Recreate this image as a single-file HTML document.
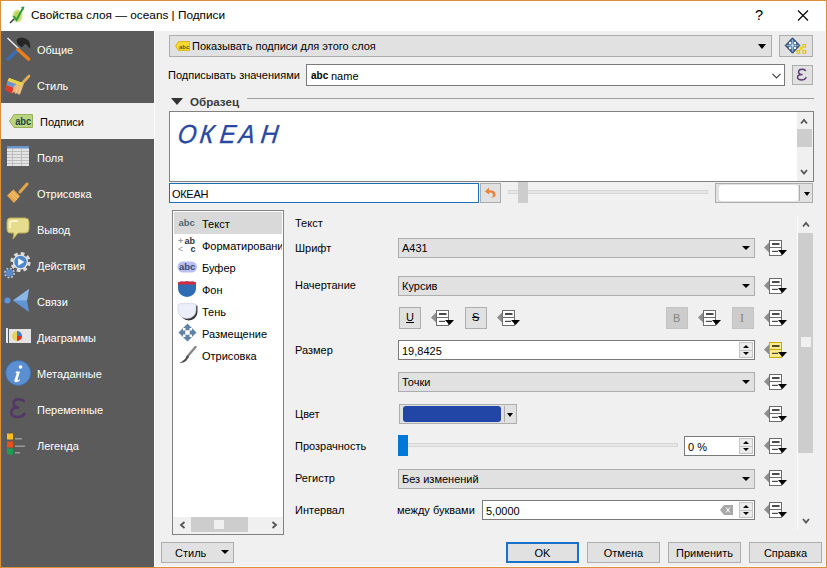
<!DOCTYPE html>
<html><head><meta charset="utf-8">
<style>
*{box-sizing:border-box}
html,body{margin:0;padding:0}
body{width:827px;height:568px;overflow:hidden;position:relative;background:#f0f0f0;font-family:"Liberation Sans",sans-serif;font-size:11px;color:#000}
.a{position:absolute}
.t{position:absolute;white-space:nowrap;line-height:13px}
.w{color:#fff}
.combo{position:absolute;background:#e1e1e1;border:1px solid #adadad}
.inp{position:absolute;background:#fff;border:1px solid #7a7a7a}
.btn{position:absolute;background:#e1e1e1;border:1px solid #adadad;text-align:center}
</style></head><body>

<div class="a" style="left:0;top:0;width:827px;height:568px;border:1px solid #d8913a;z-index:50;pointer-events:none"></div>
<div class="a" style="left:825px;top:31px;width:1px;height:536px;background:#fbfbfb;z-index:49"></div>
<div class="a" style="left:155px;top:566px;width:671px;height:1px;background:#fbfbfb;z-index:49"></div>
<div class="a" style="left:154px;top:31px;width:1px;height:536px;background:#fbfbfb;z-index:49"></div>
<div class="a" style="left:1px;top:31px;width:2px;height:72px;background:#5d5f68;z-index:49"></div>
<div class="a" style="left:1px;top:139px;width:2px;height:428px;background:#5d5f68;z-index:49"></div>
<div class="a" style="left:1px;top:1px;width:825px;height:30px;background:#fff"></div>
<svg class="a" style="left:9px;top:6px" width="16" height="18" viewBox="0 0 16 18">
<ellipse cx="8.5" cy="10" rx="5" ry="6.5" fill="#d3e48a"/>
<ellipse cx="8.5" cy="10" rx="3" ry="4.5" fill="#b9d35a"/>
<path d="M4.5 10 L7.5 14 L14 2" stroke="#2c9c3a" stroke-width="2" fill="none"/>
<polygon points="12,1 15.5,0.5 14.5,4" fill="#2c9c3a"/>
<path d="M1 17 L5 13" stroke="#333" stroke-width="1.5"/>
</svg>
<div class="t" style="left:31px;top:9px;font-size:11.8px">Свойства слоя — oceans | Подписи</div>
<div class="t" style="left:755px;top:7px;font-size:14.5px;line-height:16px">?</div>
<svg class="a" style="left:797px;top:10px" width="12" height="11" viewBox="0 0 12 11"><path d="M1 0.5 L11 10.5 M11 0.5 L1 10.5" stroke="#000" stroke-width="1.1"/></svg>
<div class="a" style="left:1px;top:31px;width:153px;height:536px;background:#5b5b5b"></div>
<div class="a" style="left:1px;top:103px;width:153px;height:36px;background:#f0f0f0"></div>
<div class="t w" style="left:37px;top:44px">Общие</div>
<div class="t w" style="left:37px;top:80px">Стиль</div>
<div class="t" style="left:40px;top:116px">Подписи</div>
<div class="t w" style="left:37px;top:152px">Поля</div>
<div class="t w" style="left:37px;top:188px">Отрисовка</div>
<div class="t w" style="left:37px;top:224px">Вывод</div>
<div class="t w" style="left:37px;top:260px">Действия</div>
<div class="t w" style="left:37px;top:296px">Связи</div>
<div class="t w" style="left:37px;top:332px">Диаграммы</div>
<div class="t w" style="left:37px;top:368px">Метаданные</div>
<div class="t w" style="left:37px;top:404px">Переменные</div>
<div class="t w" style="left:37px;top:440px">Легенда</div>

<svg class="a" style="left:2px;top:33px" width="34" height="34" viewBox="0 0 34 34">
<path d="M14.5 7 Q16 4.5 20 4.5 Q24 4.8 26.5 7.5 Q28.5 10 28.2 15.5 L26.5 14 Q25.5 11.5 23 11 L19.5 14.5 L15.5 11 Z" fill="#262626"/>
<line x1="6.5" y1="26" x2="17" y2="15.5" stroke="#3a6db3" stroke-width="3.6" stroke-linecap="round"/>
<line x1="5.5" y1="5" x2="16.5" y2="15.5" stroke="#f2f2f2" stroke-width="1.4"/>
<line x1="16" y1="16.5" x2="26.5" y2="26" stroke="#ea7d1c" stroke-width="3.6" stroke-linecap="round"/>
</svg>
<svg class="a" style="left:2px;top:69px" width="34" height="34" viewBox="0 0 34 34">
<line x1="27" y1="7" x2="19.5" y2="15" stroke="#e2ad55" stroke-width="2.6" stroke-linecap="round"/>
<polygon points="7,9 22,14.5 18,25.5 3.5,20" fill="#e8b678"/>
<polygon points="7,9 21,14 20,17 5.5,12" fill="#e6d44c"/>
<polygon points="5.5,12 14,15 12.5,19 4.5,16" fill="#6d93cf"/>
<polygon points="4.5,16 12,19 10.5,25 3,21" fill="#df3a2c"/>
<path d="M13 16 L10.5 24 M16 17 L13.5 25 M19 18 L16.5 25.5" stroke="#f2d2a0" stroke-width="0.8"/>
</svg>
<svg class="a" style="left:9px;top:114px" width="24" height="14" viewBox="0 0 24 14">
<polygon points="0.5,7 5,0.5 23.5,0.5 23.5,13.5 5,13.5" fill="#b9d67f" stroke="#98b05a"/>
<text x="6.2" y="11" font-family="Liberation Sans" font-weight="bold" font-size="10" fill="#24424a" textLength="16" lengthAdjust="spacingAndGlyphs">abc</text>
</svg>
<svg class="a" style="left:7px;top:146px" width="23" height="21" viewBox="0 0 23 21">
<rect x="0" y="0" width="22" height="20" fill="#e4e4e4"/>
<rect x="0" y="0" width="22" height="2.5" fill="#6a94cc"/>
<path d="M0 5.5 H22 M0 8.5 H22 M0 11.5 H22 M0 14.5 H22 M0 17.5 H22 M5.5 2.5 V20 M14.5 2.5 V20" stroke="#bdbdbd" stroke-width="1"/>
</svg>
<svg class="a" style="left:5px;top:182px" width="24" height="23" viewBox="0 0 24 23">
<line x1="22" y1="2" x2="15" y2="10" stroke="#e3a54a" stroke-width="3" stroke-linecap="round"/>
<polygon points="2,13.5 8.5,7.5 15,14 9,21" fill="#e9a94c"/>
<path d="M5 11 L12 18 M7 9.5 L13.5 16" stroke="#f4cc8a" stroke-width="1"/>
</svg>
<svg class="a" style="left:6px;top:217px" width="24" height="23" viewBox="0 0 24 23">
<path d="M4 1 H19 Q23 1 23 5 V12 Q23 16 19 16 H12 L7 22 L8 16 H4 Q1 16 1 12 V5 Q1 1 4 1 Z" fill="#e6dc8e" stroke="#bcae55" stroke-width="1"/>
<path d="M4 11 V6 Q4 4 7 4 H12" stroke="#fffbe0" stroke-width="1.3" fill="none"/>
</svg>
<svg class="a" style="left:3px;top:251px" width="30" height="29" viewBox="0 0 30 29">
<circle cx="17.5" cy="11" r="8.6" fill="none" stroke="#dcdcdc" stroke-width="3" stroke-dasharray="3.7 3.05"/>
<circle cx="17.5" cy="11" r="7.6" fill="#e6e6e6"/>
<circle cx="17.5" cy="11" r="6.2" fill="#4f88c9"/>
<polygon points="15.2,7.3 15.2,14.7 21.2,11" fill="#fff"/>
<circle cx="6.5" cy="22" r="4.6" fill="none" stroke="#c9d3e0" stroke-width="1.6" stroke-dasharray="1.8 1.8"/>
<circle cx="6.5" cy="22" r="3.8" fill="#5a89c6"/>
</svg>
<svg class="a" style="left:3px;top:288px" width="28" height="26" viewBox="0 0 28 26">
<polygon points="10,12.5 26,1 24,12.5 26,24" fill="#5f95d6"/>
<polygon points="10,12.5 26,1 24,12.5" fill="#8cb6e8"/>
<circle cx="4.5" cy="12.5" r="3" fill="#5f95d6"/>
</svg>
<svg class="a" style="left:6px;top:327px" width="25" height="17" viewBox="0 0 25 17">
<rect x="0" y="1" width="2" height="15" fill="#e8e8e8"/>
<rect x="3" y="2" width="22" height="14" fill="#e4e4e4"/>
<circle cx="11" cy="9" r="5" fill="#e9d35a"/>
<path d="M11 9 L11 4 A5 5 0 0 1 16 9 Z" fill="#4a7ac8"/>
<path d="M11 9 L16 9 A5 5 0 0 1 11 14 Z" fill="#d8302a"/>
</svg>
<svg class="a" style="left:5px;top:360px" width="27" height="27" viewBox="0 0 27 27">
<circle cx="13.2" cy="13" r="12.5" fill="#5a8fd2" stroke="#3f6fae" stroke-width="0.8"/>
<circle cx="15.5" cy="7" r="1.8" fill="#fff"/>
<path d="M11 11.5 H15 L12.5 19.5 Q12.3 20.5 13.5 20 L15 19 L14.5 21 Q12 22.5 10 22 Q9 21.5 9.5 20 L11.8 13 H10.5 Z" fill="#fff"/>
</svg>
<svg class="a" style="left:8px;top:397px" width="20" height="24" viewBox="0 0 20 24"><path d="M16 4.2 Q14 2.2 11 2.2 Q5.6 2.2 5.6 6.3 Q5.6 10.5 11 10.5 Q3.2 10.5 3.2 15.2 Q3.2 20 10 20 Q14.5 20 16.5 16.8" stroke="#533669" stroke-width="2.6" fill="none" stroke-linecap="round"/></svg>
<svg class="a" style="left:6px;top:433px" width="20" height="22" viewBox="0 0 20 22">
<rect x="1" y="0.5" width="6" height="6" fill="#f6c21a"/>
<rect x="1" y="8.5" width="6" height="6" fill="#e8501c"/>
<rect x="1" y="15.5" width="6" height="6" fill="#1aa050"/>
<rect x="9" y="5" width="7" height="1.5" fill="#9a9a9a"/>
<rect x="9" y="12.5" width="10" height="1.5" fill="#9a9a9a"/>
<rect x="9" y="19" width="5" height="1.5" fill="#9a9a9a"/>
</svg>

<div class="combo" style="left:169px;top:35px;width:603px;height:22px"></div>
<div class="t" style="left:192px;top:40px">Показывать подписи для этого слоя</div>

<svg class="a" style="left:175px;top:41px" width="15" height="10" viewBox="0 0 15 10">
<polygon points="0.5,5 3.5,0.5 14.5,0.5 14.5,9.5 3.5,9.5" fill="#f5d830" stroke="#d8b000" stroke-width="0.8"/>
<text x="4" y="7.5" font-family="Liberation Sans" font-weight="bold" font-size="6" fill="#6a5a20">abc</text>
</svg>

<div class="a" style="left:758px;top:44px;width:0;height:0;border-left:4.5px solid transparent;border-right:4.5px solid transparent;border-top:5px solid #000"></div>
<div class="btn" style="left:779px;top:35px;width:34px;height:22px"></div>

<svg class="a" style="left:784px;top:37px" width="24" height="19" viewBox="0 0 24 19">
<polygon points="8.5,0.8 15.8,8.5 8.5,16.2 1.2,8.5" fill="#4c6c98" stroke="#22365a" stroke-width="1"/>
<path d="M8.5 2.5 V14.5 M2.8 8.5 H14.2" stroke="#8fb0d8" stroke-width="1.2"/>
<rect x="5" y="5" width="2.2" height="2.2" fill="#eef6ff"/>
<rect x="9.8" y="5" width="2.2" height="2.2" fill="#eef6ff"/>
<rect x="5" y="9.8" width="2.2" height="2.2" fill="#eef6ff"/>
<rect x="9.8" y="9.8" width="2.2" height="2.2" fill="#eef6ff"/>
<rect x="7.5" y="7.5" width="2" height="2" fill="#dfe9d8"/>
<rect x="15.6" y="9.8" width="3" height="3.2" fill="#f2d400"/>
<rect x="19" y="7.5" width="2.6" height="2.6" fill="#fff7b0" stroke="#e0c000" stroke-width="1.1"/>
<rect x="13" y="13.6" width="2.6" height="2.6" fill="#fff7b0" stroke="#e0c000" stroke-width="1.1"/>
<rect x="19" y="13.6" width="2.6" height="2.6" fill="#fff7b0" stroke="#e0c000" stroke-width="1.1"/>
</svg>

<div class="t" style="left:168px;top:69px">Подписывать значениями</div>
<div class="inp" style="left:306px;top:64px;width:479px;height:22px"></div>
<div class="t" style="left:311px;top:69px;font-weight:bold;font-size:10px">abc</div>
<div class="t" style="left:331px;top:70px">name</div>
<svg class="a" style="left:772px;top:73px" width="9" height="6" viewBox="0 0 9 6"><path d="M0.5 0.8 L4.5 4.8 L8.5 0.8" stroke="#444" stroke-width="1.2" fill="none"/></svg>
<div class="btn" style="left:792px;top:65px;width:21px;height:20px"></div>
<svg class="a" style="left:795px;top:67px" width="14" height="15" viewBox="0 0 14 15"><path d="M10.3 3.4 Q9 2.2 7.3 2.2 Q3.6 2.2 3.6 4.9 Q3.6 7.5 7.5 7.5 Q2.6 7.5 2.6 10.2 Q2.6 12.9 7 12.9 Q9.8 12.9 11 10.6" stroke="#5b3b73" stroke-width="1.5" fill="none" stroke-linecap="round"/></svg>
<div class="a" style="left:171px;top:98px;width:0;height:0;border-left:6px solid transparent;border-right:6px solid transparent;border-top:7px solid #333"></div>
<div class="t" style="left:190px;top:95px;font-size:11.6px;font-weight:bold;color:#3a3a3a">Образец</div>
<div class="a" style="left:247px;top:98px;width:567px;height:1px;background:#a0a0a0"></div>
<div class="inp" style="left:169px;top:111px;width:645px;height:71px;border-color:#828282"></div>
<div class="t" style="left:177px;top:120px;font-size:26px;line-height:28px;font-style:italic;color:#2a48a0;transform:skewX(-7deg) scaleX(0.92);transform-origin:0 23px;-webkit-text-stroke:0.35px #2a48a0">О</div>
<div class="t" style="left:199px;top:120px;font-size:26px;line-height:28px;font-style:italic;color:#2a48a0;transform:skewX(-7deg) scaleX(0.92);transform-origin:0 23px;-webkit-text-stroke:0.35px #2a48a0">К</div>
<div class="t" style="left:219px;top:120px;font-size:26px;line-height:28px;font-style:italic;color:#2a48a0;transform:skewX(-7deg) scaleX(0.92);transform-origin:0 23px;-webkit-text-stroke:0.35px #2a48a0">Е</div>
<div class="t" style="left:238px;top:120px;font-size:26px;line-height:28px;font-style:italic;color:#2a48a0;transform:skewX(-7deg) scaleX(0.92);transform-origin:0 23px;-webkit-text-stroke:0.35px #2a48a0">А</div>
<div class="t" style="left:260px;top:120px;font-size:26px;line-height:28px;font-style:italic;color:#2a48a0;transform:skewX(-7deg) scaleX(0.92);transform-origin:0 23px;-webkit-text-stroke:0.35px #2a48a0">Н</div>
<div class="a" style="left:797px;top:112px;width:16px;height:69px;background:#f0f0f0"></div>
<div class="a" style="left:797px;top:129px;width:15px;height:18px;background:#cdcdcd"></div>
<svg class="a" style="left:800px;top:118px" width="8" height="7" viewBox="0 0 8 7"><path d="M1 5.5 L4 2 L7 5.5" stroke="#555" stroke-width="1.8" fill="none"/></svg>
<svg class="a" style="left:800px;top:169px" width="8" height="7" viewBox="0 0 8 7"><path d="M1 1 L4 4.5 L7 1" stroke="#555" stroke-width="1.8" fill="none"/></svg>
<div class="inp" style="left:169px;top:183px;width:310px;height:20px;border-color:#1d6fb8"></div>
<div class="t" style="left:172px;top:188px;letter-spacing:-0.3px">ОКЕАН</div>
<div class="btn" style="left:480px;top:183px;width:21px;height:20px"></div>

<svg class="a" style="left:484px;top:186px" width="13" height="13" viewBox="0 0 13 13">
<path d="M5 1.5 L1 5.5 L5 8.5 L5 6.5 Q9 6 9 9 Q9 11 7 11.5 Q11.5 12 11.5 8.5 Q11.5 4 5 4.2 Z" fill="#e9823a"/>
</svg>

<div class="a" style="left:508px;top:190px;width:200px;height:4px;background:#e7e7e7;border:1px solid #d6d6d6"></div>
<div class="a" style="left:518px;top:182px;width:10px;height:21px;background:#cdcdcd"></div>
<div class="btn" style="left:715px;top:183px;width:98px;height:20px"></div>
<div class="a" style="left:719px;top:185px;width:79px;height:16px;background:#fff;border-radius:3px"></div>
<div class="a" style="left:799px;top:185px;width:1px;height:16px;background:#adadad"></div>
<div class="a" style="left:804px;top:192px;width:0;height:0;border-left:3.5px solid transparent;border-right:3.5px solid transparent;border-top:4px solid #000"></div>
<div class="inp" style="left:172px;top:210px;width:112px;height:325px;border-color:#828282"></div>
<div class="a" style="left:174px;top:212px;width:108px;height:22px;background:#d9d9d9"></div>
<div class="a" style="left:173px;top:211px;width:109px;height:300px;overflow:hidden">
<div class="t" style="left:29px;top:7px">Текст</div>
<div class="t" style="left:29px;top:29px">Форматирование</div>
<div class="t" style="left:29px;top:51px">Буфер</div>
<div class="t" style="left:29px;top:73px">Фон</div>
<div class="t" style="left:29px;top:95px">Тень</div>
<div class="t" style="left:29px;top:117px">Размещение</div>
<div class="t" style="left:29px;top:139px">Отрисовка</div>
</div>

<svg class="a" style="left:178px;top:218px" width="18" height="9" viewBox="0 0 18 9">
<text x="0.5" y="7.5" font-family="Liberation Sans" font-weight="bold" font-size="9.5" fill="#4a6a80">abc</text>
</svg>
<svg class="a" style="left:178px;top:237px" width="19" height="16" viewBox="0 0 19 16">
<text x="0" y="7" font-family="Liberation Sans" font-weight="bold" font-size="9" fill="#999">+</text>
<text x="6.5" y="7" font-family="Liberation Sans" font-weight="bold" font-size="9" fill="#333">ab</text>
<text x="0" y="15" font-family="Liberation Sans" font-size="9" fill="#999">&lt;</text>
<text x="12.5" y="15" font-family="Liberation Sans" font-weight="bold" font-size="9" fill="#333">c</text>
</svg>
<svg class="a" style="left:177px;top:261px" width="21" height="12" viewBox="0 0 21 12">
<rect x="0.5" y="0.5" width="19.5" height="11" rx="5.5" fill="#b9bff2"/>
<text x="2" y="9.3" font-family="Liberation Sans" font-weight="bold" font-size="9.5" fill="#384a72">abc</text>
</svg>
<svg class="a" style="left:177px;top:280px" width="20" height="18" viewBox="0 0 20 18">
<path d="M1 2.5 Q4 0.8 7 1.8 Q10 0.5 13 1.8 Q16 0.8 19 2.5 V8.5 A9 8.5 0 0 1 1 8.5 Z" fill="#2e6db4"/>
<path d="M1 2.5 Q4 0.8 7 1.8 Q10 0.5 13 1.8 Q16 0.8 19 2.5 V4.5 H1 Z" fill="#d62a3c"/>
</svg>
<svg class="a" style="left:177px;top:302px" width="21" height="19" viewBox="0 0 21 19">
<path d="M3 4 Q6 2.3 9 3.3 Q12 2 15 3.3 Q18 2.3 20.5 4 V10 A8.75 8.5 0 0 1 3 10 Z" fill="#353535"/>
<path d="M1 2.5 Q4 0.8 7 1.8 Q10 0.5 13 1.8 Q16 0.8 19 2.5 V8.5 A9 8 0 0 1 1 8.5 Z" fill="#eceef9" stroke="#c4c8de" stroke-width="0.6"/>
</svg>
<svg class="a" style="left:178px;top:323px" width="19" height="19" viewBox="0 0 19 19">
<polygon points="9.5,0.5 14,5 11.5,5 11.5,7.5 7.5,7.5 7.5,5 5,5" fill="#5f84a6"/>
<polygon points="9.5,18.5 14,14 11.5,14 11.5,11.5 7.5,11.5 7.5,14 5,14" fill="#5f84a6"/>
<polygon points="0.5,9.5 5,5 5,7.5 7.5,7.5 7.5,11.5 5,11.5 5,14" fill="#5f84a6"/>
<polygon points="18.5,9.5 14,5 14,7.5 11.5,7.5 11.5,11.5 14,11.5 14,14" fill="#5f84a6"/>
<rect x="7.5" y="7.5" width="4" height="4" fill="#fff"/>
</svg>
<svg class="a" style="left:178px;top:346px" width="19" height="19" viewBox="0 0 19 19">
<path d="M17.5 1 L9 11" stroke="#8a8a8a" stroke-width="2.5" stroke-linecap="round"/>
<path d="M10 9 L7 13 Q4 16 1 17 Q5 17.5 8 15 L11 11 Z" fill="#4a4a4a"/>
</svg>

<div class="a" style="left:173px;top:517px;width:110px;height:17px;background:#f0f0f0"></div>
<div class="a" style="left:191px;top:517px;width:57px;height:15px;background:#cdcdcd"></div>
<div class="a" style="left:214px;top:520px;width:10px;height:9px;background:#f0f0f0"></div>
<svg class="a" style="left:179px;top:521px" width="7" height="8" viewBox="0 0 7 8"><path d="M5.5 1 L2 4 L5.5 7" stroke="#555" stroke-width="1.8" fill="none"/></svg>
<svg class="a" style="left:271px;top:521px" width="7" height="8" viewBox="0 0 7 8"><path d="M1.5 1 L5 4 L1.5 7" stroke="#555" stroke-width="1.8" fill="none"/></svg>
<div class="t" style="left:295px;top:217px">Текст</div>
<div class="t" style="left:295px;top:242px">Шрифт</div>
<div class="combo" style="left:398px;top:238px;width:357px;height:20px"></div>
<div class="t" style="left:402px;top:242px">A431</div>
<div class="a" style="left:742px;top:246px;width:0;height:0;border-left:4.0px solid transparent;border-right:4.0px solid transparent;border-top:4px solid #000"></div>
<svg class="a" style="left:764px;top:239px" width="24" height="18" viewBox="0 0 24 18">
<polygon points="0,8.5 5.5,3 5.5,14" fill="#8e8e8e"/>
<rect x="5.5" y="1.5" width="12" height="15" fill="#fff" stroke="#6e6e6e"/>
<line x1="5.5" y1="8.5" x2="17.5" y2="8.5" stroke="#6e6e6e"/>
<rect x="8" y="4" width="7.5" height="2" fill="#4a4a4a"/>
<rect x="8" y="11.8" width="6" height="1.2" fill="#4a4a4a"/>
<polygon points="14,11 23,11 18.5,16" fill="#000"/>
</svg>
<div class="t" style="left:295px;top:279px">Начертание</div>
<div class="combo" style="left:398px;top:276px;width:357px;height:20px"></div>
<div class="t" style="left:402px;top:280px">Курсив</div>
<div class="a" style="left:742px;top:284px;width:0;height:0;border-left:4.0px solid transparent;border-right:4.0px solid transparent;border-top:4px solid #000"></div>
<svg class="a" style="left:764px;top:277px" width="24" height="18" viewBox="0 0 24 18">
<polygon points="0,8.5 5.5,3 5.5,14" fill="#8e8e8e"/>
<rect x="5.5" y="1.5" width="12" height="15" fill="#fff" stroke="#6e6e6e"/>
<line x1="5.5" y1="8.5" x2="17.5" y2="8.5" stroke="#6e6e6e"/>
<rect x="8" y="4" width="7.5" height="2" fill="#4a4a4a"/>
<rect x="8" y="11.8" width="6" height="1.2" fill="#4a4a4a"/>
<polygon points="14,11 23,11 18.5,16" fill="#000"/>
</svg>
<div class="btn" style="left:399px;top:307px;width:22px;height:22px"></div>
<div class="t" style="left:406px;top:311px;text-decoration:underline">U</div>
<svg class="a" style="left:431px;top:309px" width="24" height="18" viewBox="0 0 24 18">
<polygon points="0,8.5 5.5,3 5.5,14" fill="#8e8e8e"/>
<rect x="5.5" y="1.5" width="12" height="15" fill="#fff" stroke="#6e6e6e"/>
<line x1="5.5" y1="8.5" x2="17.5" y2="8.5" stroke="#6e6e6e"/>
<rect x="8" y="4" width="7.5" height="2" fill="#4a4a4a"/>
<rect x="8" y="11.8" width="6" height="1.2" fill="#4a4a4a"/>
<polygon points="14,11 23,11 18.5,16" fill="#000"/>
</svg>
<div class="btn" style="left:465px;top:307px;width:22px;height:22px"></div>
<div class="t" style="left:472px;top:311px;text-decoration:line-through">S</div>
<svg class="a" style="left:497px;top:309px" width="24" height="18" viewBox="0 0 24 18">
<polygon points="0,8.5 5.5,3 5.5,14" fill="#8e8e8e"/>
<rect x="5.5" y="1.5" width="12" height="15" fill="#fff" stroke="#6e6e6e"/>
<line x1="5.5" y1="8.5" x2="17.5" y2="8.5" stroke="#6e6e6e"/>
<rect x="8" y="4" width="7.5" height="2" fill="#4a4a4a"/>
<rect x="8" y="11.8" width="6" height="1.2" fill="#4a4a4a"/>
<polygon points="14,11 23,11 18.5,16" fill="#000"/>
</svg>
<div class="btn" style="left:666px;top:307px;width:22px;height:22px;background:#cccccc;border-color:#c4c4c4"></div>
<div class="t" style="left:673px;top:312px;color:#838383">B</div>
<svg class="a" style="left:698px;top:309px" width="24" height="18" viewBox="0 0 24 18">
<polygon points="0,8.5 5.5,3 5.5,14" fill="#8e8e8e"/>
<rect x="5.5" y="1.5" width="12" height="15" fill="#fff" stroke="#6e6e6e"/>
<line x1="5.5" y1="8.5" x2="17.5" y2="8.5" stroke="#6e6e6e"/>
<rect x="8" y="4" width="7.5" height="2" fill="#4a4a4a"/>
<rect x="8" y="11.8" width="6" height="1.2" fill="#4a4a4a"/>
<polygon points="14,11 23,11 18.5,16" fill="#000"/>
</svg>
<div class="btn" style="left:732px;top:307px;width:22px;height:22px;background:#cccccc;border-color:#c4c4c4"></div>
<div class="t" style="left:740px;top:312px;color:#838383;font-family:&quot;Liberation Serif&quot;,serif;font-size:12px">I</div>
<svg class="a" style="left:764px;top:309px" width="24" height="18" viewBox="0 0 24 18">
<polygon points="0,8.5 5.5,3 5.5,14" fill="#8e8e8e"/>
<rect x="5.5" y="1.5" width="12" height="15" fill="#fff" stroke="#6e6e6e"/>
<line x1="5.5" y1="8.5" x2="17.5" y2="8.5" stroke="#6e6e6e"/>
<rect x="8" y="4" width="7.5" height="2" fill="#4a4a4a"/>
<rect x="8" y="11.8" width="6" height="1.2" fill="#4a4a4a"/>
<polygon points="14,11 23,11 18.5,16" fill="#000"/>
</svg>
<div class="t" style="left:295px;top:344px">Размер</div>
<div class="inp" style="left:398px;top:340px;width:357px;height:20px"></div>
<div class="t" style="left:402px;top:345px">19,8425</div>
<div class="a" style="left:739px;top:342px;width:14px;height:16px;border:1px solid #c4c4c4;background:#ebebeb"></div>
<div class="a" style="left:739px;top:350px;width:14px;height:1px;background:#c4c4c4"></div>
<div class="a" style="left:743px;top:345px;width:0;height:0;border-left:3px solid transparent;border-right:3px solid transparent;border-bottom:3px solid #000"></div>
<div class="a" style="left:743px;top:352px;width:0;height:0;border-left:3px solid transparent;border-right:3px solid transparent;border-top:3px solid #000"></div>
<svg class="a" style="left:764px;top:341px" width="24" height="18" viewBox="0 0 24 18">
<polygon points="0,8.5 5.5,3 5.5,14" fill="#8e8e8e"/>
<rect x="5.5" y="1.5" width="12" height="15" fill="#f8ec8c" stroke="#c9a800"/>
<line x1="5.5" y1="8.5" x2="17.5" y2="8.5" stroke="#c9a800"/>
<rect x="8" y="4" width="7.5" height="2" fill="#4e4a2a"/>
<rect x="8" y="11.8" width="6" height="1.2" fill="#4e4a2a"/>
<polygon points="14,11 23,11 18.5,16" fill="#000"/>
</svg>
<div class="combo" style="left:398px;top:372px;width:357px;height:20px"></div>
<div class="t" style="left:402px;top:376px">Точки</div>
<div class="a" style="left:742px;top:380px;width:0;height:0;border-left:4.0px solid transparent;border-right:4.0px solid transparent;border-top:4px solid #000"></div>
<svg class="a" style="left:764px;top:373px" width="24" height="18" viewBox="0 0 24 18">
<polygon points="0,8.5 5.5,3 5.5,14" fill="#8e8e8e"/>
<rect x="5.5" y="1.5" width="12" height="15" fill="#fff" stroke="#6e6e6e"/>
<line x1="5.5" y1="8.5" x2="17.5" y2="8.5" stroke="#6e6e6e"/>
<rect x="8" y="4" width="7.5" height="2" fill="#4a4a4a"/>
<rect x="8" y="11.8" width="6" height="1.2" fill="#4a4a4a"/>
<polygon points="14,11 23,11 18.5,16" fill="#000"/>
</svg>
<div class="t" style="left:295px;top:408px">Цвет</div>
<div class="btn" style="left:399px;top:404px;width:118px;height:20px"></div>
<div class="a" style="left:403px;top:406px;width:98px;height:16px;background:#2146a6;border-radius:3px"></div>
<div class="a" style="left:504px;top:406px;width:1px;height:16px;background:#adadad"></div>
<div class="a" style="left:507px;top:413px;width:0;height:0;border-left:3.5px solid transparent;border-right:3.5px solid transparent;border-top:4px solid #000"></div>
<svg class="a" style="left:764px;top:405px" width="24" height="18" viewBox="0 0 24 18">
<polygon points="0,8.5 5.5,3 5.5,14" fill="#8e8e8e"/>
<rect x="5.5" y="1.5" width="12" height="15" fill="#fff" stroke="#6e6e6e"/>
<line x1="5.5" y1="8.5" x2="17.5" y2="8.5" stroke="#6e6e6e"/>
<rect x="8" y="4" width="7.5" height="2" fill="#4a4a4a"/>
<rect x="8" y="11.8" width="6" height="1.2" fill="#4a4a4a"/>
<polygon points="14,11 23,11 18.5,16" fill="#000"/>
</svg>
<div class="t" style="left:295px;top:440px">Прозрачность</div>
<div class="a" style="left:407px;top:443px;width:271px;height:4px;background:#e7e7e7;border:1px solid #d6d6d6"></div>
<div class="a" style="left:398px;top:435px;width:10px;height:21px;background:#0078d7"></div>
<div class="inp" style="left:684px;top:436px;width:71px;height:20px"></div>
<div class="t" style="left:688px;top:441px">0 %</div>
<div class="a" style="left:739px;top:438px;width:14px;height:16px;border:1px solid #c4c4c4;background:#ebebeb"></div>
<div class="a" style="left:739px;top:446px;width:14px;height:1px;background:#c4c4c4"></div>
<div class="a" style="left:743px;top:441px;width:0;height:0;border-left:3px solid transparent;border-right:3px solid transparent;border-bottom:3px solid #000"></div>
<div class="a" style="left:743px;top:448px;width:0;height:0;border-left:3px solid transparent;border-right:3px solid transparent;border-top:3px solid #000"></div>
<svg class="a" style="left:764px;top:437px" width="24" height="18" viewBox="0 0 24 18">
<polygon points="0,8.5 5.5,3 5.5,14" fill="#8e8e8e"/>
<rect x="5.5" y="1.5" width="12" height="15" fill="#fff" stroke="#6e6e6e"/>
<line x1="5.5" y1="8.5" x2="17.5" y2="8.5" stroke="#6e6e6e"/>
<rect x="8" y="4" width="7.5" height="2" fill="#4a4a4a"/>
<rect x="8" y="11.8" width="6" height="1.2" fill="#4a4a4a"/>
<polygon points="14,11 23,11 18.5,16" fill="#000"/>
</svg>
<div class="t" style="left:295px;top:472px">Регистр</div>
<div class="combo" style="left:398px;top:469px;width:357px;height:20px"></div>
<div class="t" style="left:402px;top:473px">Без изменений</div>
<div class="a" style="left:742px;top:477px;width:0;height:0;border-left:4.0px solid transparent;border-right:4.0px solid transparent;border-top:4px solid #000"></div>
<svg class="a" style="left:764px;top:469px" width="24" height="18" viewBox="0 0 24 18">
<polygon points="0,8.5 5.5,3 5.5,14" fill="#8e8e8e"/>
<rect x="5.5" y="1.5" width="12" height="15" fill="#fff" stroke="#6e6e6e"/>
<line x1="5.5" y1="8.5" x2="17.5" y2="8.5" stroke="#6e6e6e"/>
<rect x="8" y="4" width="7.5" height="2" fill="#4a4a4a"/>
<rect x="8" y="11.8" width="6" height="1.2" fill="#4a4a4a"/>
<polygon points="14,11 23,11 18.5,16" fill="#000"/>
</svg>
<div class="t" style="left:295px;top:504px">Интервал</div>
<div class="t" style="left:397px;top:504px">между буквами</div>
<div class="inp" style="left:482px;top:500px;width:273px;height:20px"></div>
<div class="t" style="left:486px;top:505px">5,0000</div>
<svg class="a" style="left:720px;top:505px" width="14" height="10" viewBox="0 0 14 10"><polygon points="0,5 4,0 13,0 13,10 4,10" fill="#a8a8a8"/><path d="M6 2.5 L10 7.5 M10 2.5 L6 7.5" stroke="#fff" stroke-width="1"/></svg>
<div class="a" style="left:739px;top:502px;width:14px;height:16px;border:1px solid #c4c4c4;background:#ebebeb"></div>
<div class="a" style="left:739px;top:510px;width:14px;height:1px;background:#c4c4c4"></div>
<div class="a" style="left:743px;top:505px;width:0;height:0;border-left:3px solid transparent;border-right:3px solid transparent;border-bottom:3px solid #000"></div>
<div class="a" style="left:743px;top:512px;width:0;height:0;border-left:3px solid transparent;border-right:3px solid transparent;border-top:3px solid #000"></div>
<svg class="a" style="left:764px;top:501px" width="24" height="18" viewBox="0 0 24 18">
<polygon points="0,8.5 5.5,3 5.5,14" fill="#8e8e8e"/>
<rect x="5.5" y="1.5" width="12" height="15" fill="#fff" stroke="#6e6e6e"/>
<line x1="5.5" y1="8.5" x2="17.5" y2="8.5" stroke="#6e6e6e"/>
<rect x="8" y="4" width="7.5" height="2" fill="#4a4a4a"/>
<rect x="8" y="11.8" width="6" height="1.2" fill="#4a4a4a"/>
<polygon points="14,11 23,11 18.5,16" fill="#000"/>
</svg>
<div class="a" style="left:797px;top:216px;width:1px;height:313px;background:#fff"></div>
<div class="a" style="left:798px;top:233px;width:15px;height:220px;background:#cdcdcd"></div>
<div class="a" style="left:801px;top:337px;width:10px;height:10px;background:#f0f0f0"></div>
<svg class="a" style="left:802px;top:221px" width="8" height="7" viewBox="0 0 8 7"><path d="M1 5.5 L4 2 L7 5.5" stroke="#555" stroke-width="1.8" fill="none"/></svg>
<svg class="a" style="left:802px;top:518px" width="8" height="7" viewBox="0 0 8 7"><path d="M1 1 L4 4.5 L7 1" stroke="#555" stroke-width="1.8" fill="none"/></svg>
<div class="btn" style="left:161px;top:542px;width:73px;height:21px"></div>
<div class="t" style="left:175px;top:547px">Стиль</div>
<div class="a" style="left:221px;top:550px;width:0;height:0;border-left:4.0px solid transparent;border-right:4.0px solid transparent;border-top:4px solid #000"></div>
<div class="btn" style="left:506px;top:542px;width:73px;height:21px;border:2px solid #1a6fc9;line-height:19px">OK</div>
<div class="btn" style="left:587px;top:542px;width:73px;height:21px;line-height:21px">Отмена</div>
<div class="btn" style="left:668px;top:542px;width:73px;height:21px;line-height:21px">Применить</div>
<div class="btn" style="left:749px;top:542px;width:73px;height:21px;line-height:21px">Справка</div>
</body></html>
